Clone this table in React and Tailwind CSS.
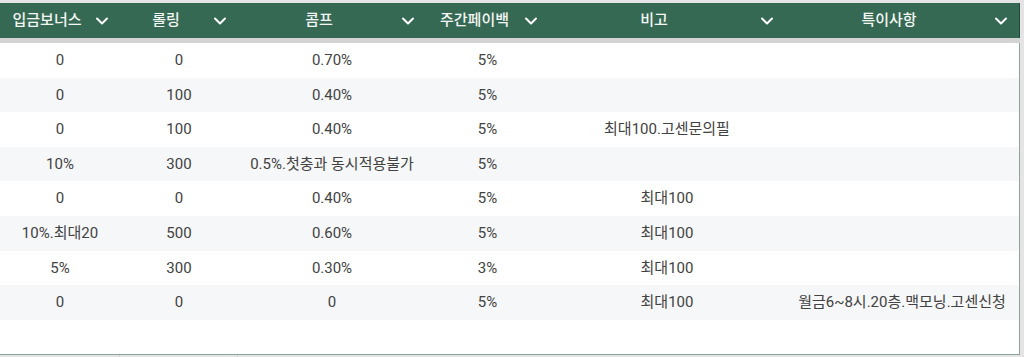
import { ChevronDown } from 'lucide-react';

const columns = [
  { title: '입금보너스', width: 'w-[120px]' },
  { title: '롤링', width: 'w-[118px]' },
  { title: '콤프', width: 'w-[188px]' },
  { title: '주간페이백', width: 'w-[123px]' },
  { title: '비고', width: 'w-[236px]' },
  { title: '특이사항', width: 'w-[234px]' },
];

const rows = [
  ['0', '0', '0.70%', '5%', '', ''],
  ['0', '100', '0.40%', '5%', '', ''],
  ['0', '100', '0.40%', '5%', '최대100.고센문의필', ''],
  ['10%', '300', '0.5%.첫충과 동시적용불가', '5%', '', ''],
  ['0', '0', '0.40%', '5%', '최대100', ''],
  ['10%.최대20', '500', '0.60%', '5%', '최대100', ''],
  ['5%', '300', '0.30%', '3%', '최대100', ''],
  ['0', '0', '0', '5%', '최대100', '월금6~8시.20층.맥모닝.고센신청'],
];

function App() {
  return (
    <div
      className="w-[1024px] h-[357px] overflow-hidden bg-[#e4e4e4] pt-[3px]"
      style={{ fontFamily: 'Roboto, "Noto Sans CJK KR", sans-serif' }}
    >
      <div className="w-[1020px]">
        {/* 헤더 */}
        <div className="flex h-[35px] bg-[#356953] border-r border-[#24473a]">
          {columns.map((col) => (
            <div key={col.title} className={`${col.width} flex items-center pr-[8px]`}>
              <span className="flex-1 pl-[2px] text-center text-[15px] font-medium text-[#f4f6f5] whitespace-nowrap">
                {col.title}
              </span>
              <ChevronDown size={20} strokeWidth={2.4} className="text-white" />
            </div>
          ))}
        </div>
        <div className="h-[5px] bg-[#d2d3d2]" />

        {/* 본문 */}
        <div className="h-[312px] bg-white border-r border-b border-[#8ca598]">
          {rows.map((row, i) => (
            <div
              key={i}
              className={`flex h-[34.6px] items-center ${i % 2 === 1 ? 'bg-[#f6f7f9]' : 'bg-white'}`}
            >
              {row.map((cell, j) => (
                <div
                  key={j}
                  className={`${columns[j].width} text-center text-[15px] text-[#424242] whitespace-nowrap`}
                >
                  {cell}
                </div>
              ))}
            </div>
          ))}
        </div>
        <div className="flex h-[4px]">
          <div className="w-[120px] border-r border-[#cfd6d2]" />
          <div className="w-[118px] border-r border-[#cfd6d2]" />
        </div>
      </div>
    </div>
  );
}

export default App;
